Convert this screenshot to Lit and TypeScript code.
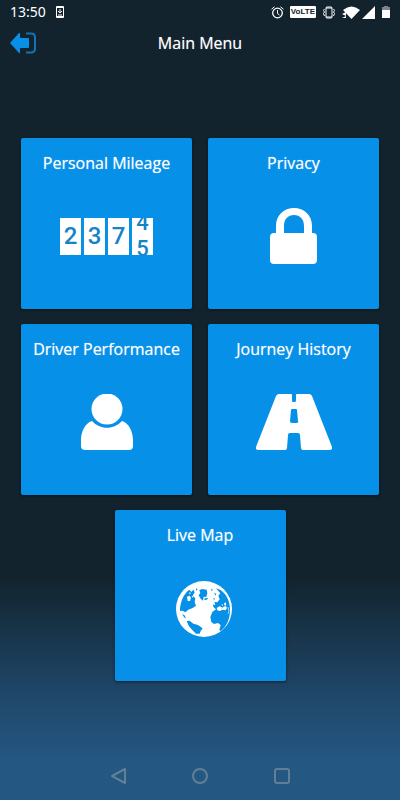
import { LitElement, html, css, svg } from "lit";
import { customElement } from "lit/decorators.js";

const odometer = html`
  <span class="odometer" aria-hidden="true">
    <span class="wheel">2</span>
    <span class="wheel">3</span>
    <span class="wheel">7</span>
    <span class="wheel rolling"><span>4</span><span>5</span></span>
  </span>
`;

const icon = (width: number, height: number, viewBox: string, body: unknown) => html`
  <svg width=${width} height=${height} viewBox=${viewBox} aria-hidden="true">${body}</svg>
`;

const lock = icon(48, 56, "0 0 48 56", svg`
  <path fill="#fff" fill-rule="evenodd" d="M6 25V18C6 7 14 0 24 0S42 7 42 18V25H43Q47 25 47 29V52Q47 56 43 56H4Q0 56 0 52V29Q0 25 4 25ZM14 25H34V18C34 11 30 7 24 7S14 11 14 18Z"/>
`);

const person = icon(54, 56, "0 0 54 56", svg`
  <circle cx="27" cy="15" r="15.5" fill="#fff"/>
  <path fill="#fff" d="M12 27C20 36 34 36 42 27C49 29 53 38 53 46V52Q53 56 49 56H5Q1 56 1 52V46C1 38 5 29 12 27Z"/>
`);

const road = icon(76, 56, "0 0 76 56", svg`
  <path fill="#fff" fill-rule="evenodd" d="M23 0H35Q36 0 36 1V6Q36 8 37 8H39Q40 8 40 6V1Q40 0 41 0H53Q55 0 56 2L76 53Q77 56 73 56H47Q45 56 45 54L44 41Q44 39 42 39H34Q32 39 32 41L31 54Q31 56 29 56H3Q-1 56 0 53L20 2Q21 0 23 0ZM35 16L34 27Q34 29 36 29H40Q43 29 42 27L41 16Q41 15 40 15H36Q35 15 35 16Z"/>
`);

const globe = icon(64, 58, "504 238 192 174", svg`
  <circle cx="612" cy="328" r="84" fill="#fff"/>
  <g fill="#0790e8">
    <path d="M540 334C540 308 550 283 568 270L574 277L580 270L584 278L578 288L586 296L584 308L588 318L578 325L565 330L556 338L548 333Z"/>
    <path d="M598 272L606 268L620 270L622 280L619 292L611 291L609 303L602 297L596 287L601 280Z"/>
    <path d="M648 266L660 270C680 282 691 306 690 333C690 355 681 380 662 394L658 391L662 376L654 370L642 373L634 367L631 352L637 337L648 329L641 323L638 314L646 317L643 307L652 308L659 299L655 288L661 281Z"/>
    <path d="M560 364L569 363L580 372L594 376L608 386L602 394L599 402L588 402L574 388L566 378Z"/>
    <path d="M546 344L553 346L558 356L554 354Z"/>
    <path d="M588 266L593 269L588 273ZM632 268L639 270L635 274ZM643 278L649 284L646 288ZM640 294L645 297L642 302ZM612 297L622 294L624 298L615 302Z"/>
  </g>
  <g fill="#fff">
    <path d="M561 291L569 288L573 294L570 304L563 304ZM567 278L573 280L569 284ZM575 290L581 289L577 294Z"/>
    <path d="M650 325L658 320L666 323L663 329L669 322L678 319L681 326L676 332L668 330L659 334L652 332ZM672 311L677 308L679 316L674 318ZM664 316L668 313L669 319Z"/>
  </g>
  <path d="M684 322L687 334L684 342" fill="none" stroke="#fff" stroke-width="2"/>
`);

const tiles = [
  { label: "Personal Mileage", art: odometer },
  { label: "Privacy", art: lock },
  { label: "Driver Performance", art: person },
  { label: "Journey History", art: road },
  { label: "Live Map", art: globe },
];

@customElement("app-root")
export class AppRoot extends LitElement {
  static styles = css`
    :host {
      display: flex;
      flex-direction: column;
      min-height: 100vh;
      box-sizing: border-box;
      color: #fff;
      font-family: "Open Sans", "Noto Sans", sans-serif;
      background: linear-gradient(#12232d 0%, #12232d 72%, #1f4769 87%, #245782 95%, #245782 100%);
    }
    button {
      border: 0;
      padding: 0;
      background: none;
      color: inherit;
      font: inherit;
      cursor: pointer;
    }
    svg {
      display: block;
      flex: none;
    }
    .status {
      display: flex;
      align-items: center;
      height: 24px;
      padding: 0 10px;
    }
    .time {
      font: 14px/24px "Noto Sans", sans-serif;
      margin-right: 10px;
    }
    .signals {
      display: flex;
      align-items: center;
      gap: 6px;
      margin-left: auto;
    }
    .volte {
      padding: 0 1px;
      border-radius: 1px;
      background: #fff;
      color: #12232d;
      font: bold 8px/12px "Liberation Sans", sans-serif;
    }
    .header {
      display: grid;
      grid-template-columns: 28px 1fr 28px;
      align-items: center;
      height: 38px;
      padding: 0 10px;
    }
    .header h1 {
      margin: 0;
      font-size: 16px;
      line-height: 24px;
      font-weight: 400;
      text-align: center;
      text-shadow: 0 0 1px #fff8;
    }
    .tiles {
      display: flex;
      flex-wrap: wrap;
      justify-content: center;
      gap: 15px 16px;
      padding: 76px 21px 0;
    }
    .tile {
      display: flex;
      flex-direction: column;
      align-items: center;
      box-sizing: border-box;
      width: calc(50% - 8px);
      aspect-ratio: 1;
      padding-top: 13px;
      border-radius: 2px;
      background: #0790e8;
      box-shadow: 0 1px 3px #0008;
    }
    .label {
      font-size: 16px;
      line-height: 24px;
      white-space: nowrap;
      text-shadow: 0 0 1px #fff8;
    }
    .art {
      display: flex;
      align-items: center;
      height: 56px;
      margin-top: 33px;
    }
    .odometer {
      display: flex;
      gap: 3px;
      color: #1683c9;
      font: 500 24px/37px Roboto, sans-serif;
    }
    .wheel {
      width: 21px;
      height: 37px;
      overflow: hidden;
      background: #fff;
      text-align: center;
    }
    .rolling {
      display: flex;
      flex-direction: column;
      justify-content: center;
      font-size: 22px;
      line-height: 26px;
    }
    .nav {
      display: flex;
      justify-content: center;
      gap: 58px;
      margin-top: auto;
      padding: 12px 0;
    }
  `;

  render() {
    return html`
      <div class="status">
        <span class="time">13:50</span>
        <svg width="8" height="12" viewBox="0 0 8 12" aria-hidden="true">
          <rect width="8" height="12" rx="1" fill="#fff" />
          <path d="M1 2H7V10H1Z" fill="#12232d" />
          <path d="M4 3V7M2 5L4 7L6 5M2 9H6" fill="none" stroke="#fff" />
        </svg>
        <div class="signals">
          <svg width="13" height="13" viewBox="0 0 13 13" fill="none" stroke="#fff" aria-hidden="true">
            <circle cx="6.5" cy="7" r="4.8" stroke-width="1.3" />
            <path d="M6.5 4V7.5L8.5 9M.5 3.2L3.5.8M12.5 3.2L9.5.8" />
          </svg>
          <span class="volte">VoLTE</span>
          <svg width="14" height="13" viewBox="0 0 14 13" fill="none" stroke="#fff" aria-hidden="true">
            <rect x="4" y="1" width="6" height="11" rx="1" />
            <path d="M4 2H10M4 11H10M2.5 3L1.5 4.5L2.5 6L1.5 7.5L2.5 10M11.5 3L12.5 4.5L11.5 6L12.5 7.5L11.5 10" />
          </svg>
          <svg width="34" height="13" viewBox="0 0 34 13" fill="#fff" aria-hidden="true">
            <path d="M1 4Q9.5-3 18 4L9.5 13ZM0 8L4 6V10ZM0 12L4 10V12ZM20 13L33 0V13Z" />
          </svg>
          <svg width="8" height="12" viewBox="0 0 8 12" aria-hidden="true">
            <path d="M2 0H6V1H8V4H0V1H2Z" fill="#78848a" />
            <path d="M0 4H8V12H0Z" fill="#fff" />
          </svg>
        </div>
      </div>
      <header class="header">
        <button aria-label="Log out">
          <svg width="26" height="22" viewBox="0 0 26 22" aria-hidden="true">
            <path d="M0 11L9 1Q10 0 10 2V6H18Q19 6 19 7V15Q19 16 18 16H10V20Q10 22 9 21Z" fill="#0790e8" />
            <path d="M16 1.5H21Q25 1.5 25 5.5V16.5Q25 20.5 21 20.5H16" fill="none" stroke="#0f75bb" stroke-width="2" />
          </svg>
        </button>
        <h1>Main Menu</h1>
      </header>
      <main class="tiles">
        ${tiles.map(
          (t) => html`
            <button class="tile">
              <span class="label">${t.label}</span>
              <span class="art">${t.art}</span>
            </button>
          `
        )}
      </main>
      <nav class="nav">
        <button aria-label="Back">
          <svg width="24" height="24" viewBox="0 0 24 24" aria-hidden="true">
            <path d="M19 5V19L6 12Z" fill="none" stroke="#627f96" stroke-width="2" stroke-linejoin="round" />
          </svg>
        </button>
        <button aria-label="Home">
          <svg width="24" height="24" viewBox="0 0 24 24" aria-hidden="true">
            <circle cx="12" cy="12" r="7" fill="none" stroke="#627f96" stroke-width="2" />
          </svg>
        </button>
        <button aria-label="Recent apps">
          <svg width="24" height="24" viewBox="0 0 24 24" aria-hidden="true">
            <rect x="5" y="5" width="14" height="14" rx="2" fill="none" stroke="#627f96" stroke-width="2" />
          </svg>
        </button>
      </nav>
    `;
  }
}
